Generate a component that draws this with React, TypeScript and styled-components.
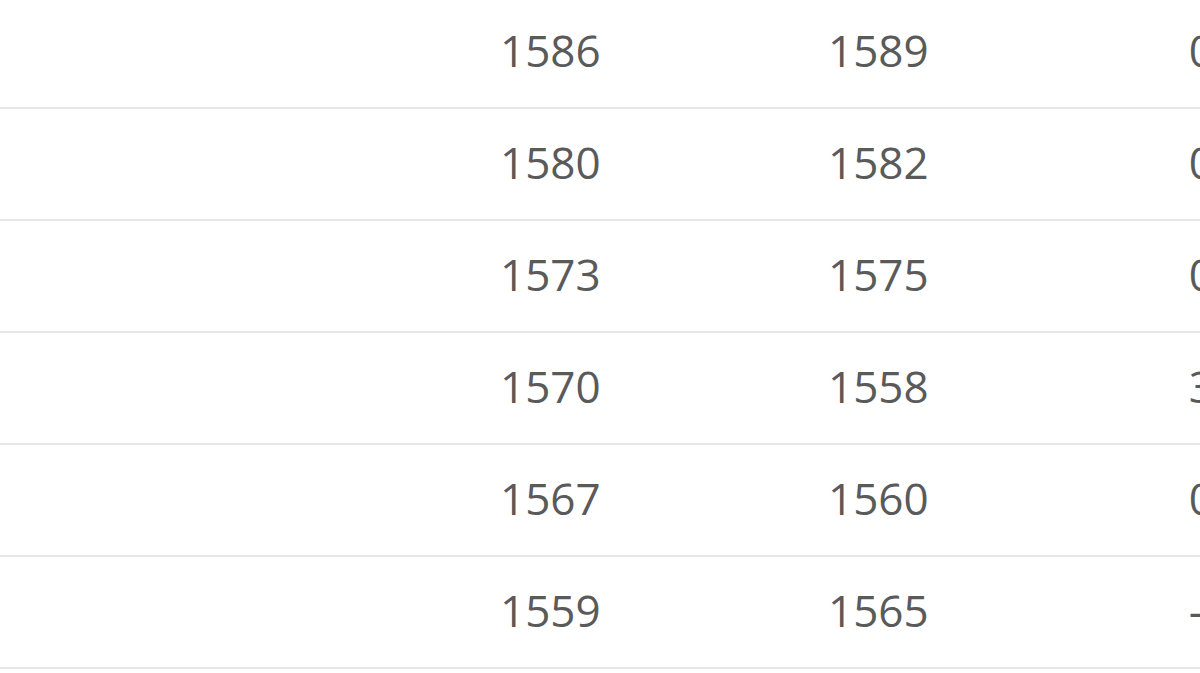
import styled, { createGlobalStyle } from "styled-components";

const rows = [
  { name: "", a: "1586", b: "1589", diff: "0.19" },
  { name: "", a: "1580", b: "1582", diff: "0.13" },
  { name: "", a: "1573", b: "1575", diff: "0.13" },
  { name: "", a: "1570", b: "1558", diff: "3.12" },
  { name: "", a: "1567", b: "1560", diff: "0.45" },
  { name: "", a: "1559", b: "1565", diff: "-0.38" },
];

const GlobalStyle = createGlobalStyle`
  html, body {
    margin: 0;
    padding: 0;
    background: #fff;
    overflow: hidden;
  }
`;

const Table = styled.div`
  display: flex;
  flex-direction: column;
  margin-top: -3px;
  width: 1200px;
  overflow: hidden;
  font-family: "Open Sans", "Noto Sans", sans-serif;
  font-size: 44px;
  color: #5a5a5a;
`;

const Row = styled.div`
  display: grid;
  grid-template-columns: 500px 328px 1fr;
  align-items: center;
  height: 106px;
  padding-bottom: 4px;
  border-bottom: 2px solid #e6e6e6;
`;

const Cell = styled.div`
  white-space: nowrap;
  line-height: 1;
`;

const Diff = styled.span`
  margin-left: 260px;
`;

const App = () => (
  <>
    <GlobalStyle />
    <Table>
      {rows.map((r, i) => (
        <Row key={i}>
          <Cell>{r.name}</Cell>
          <Cell>{r.a}</Cell>
          <Cell>
            {r.b}
            <Diff>{r.diff}</Diff>
          </Cell>
        </Row>
      ))}
    </Table>
  </>
);

export default App;
